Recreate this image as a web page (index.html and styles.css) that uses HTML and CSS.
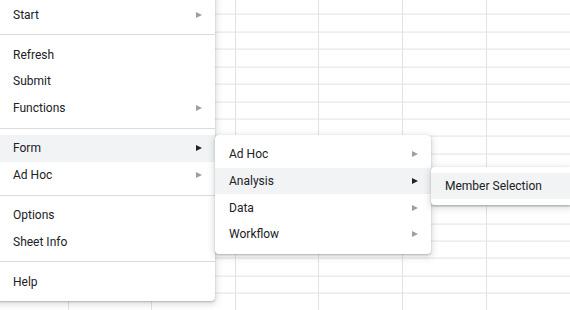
FILE: index.html
```html
<!DOCTYPE html>
<html lang="en">
<head>
  <meta charset="UTF-8">
  <title>Sheet add-on menu</title>
  <link rel="stylesheet" href="styles.css">
</head>
<body>
  <div class="sheet"></div>

  <!-- Main add-on menu -->
  <ul class="menu menu-main">
    <li class="item has-sub"><span>Start</span><i class="arrow"></i></li>
    <li class="sep"></li>
    <li class="item"><span>Refresh</span></li>
    <li class="item"><span>Submit</span></li>
    <li class="item has-sub"><span>Functions</span><i class="arrow"></i></li>
    <li class="sep"></li>
    <li class="item has-sub active"><span>Form</span><i class="arrow"></i></li>
    <li class="item has-sub"><span>Ad Hoc</span><i class="arrow"></i></li>
    <li class="sep"></li>
    <li class="item"><span>Options</span></li>
    <li class="item"><span>Sheet Info</span></li>
    <li class="sep"></li>
    <li class="item"><span>Help</span></li>
  </ul>

  <!-- Form submenu -->
  <ul class="menu menu-form">
    <li class="item has-sub"><span>Ad Hoc</span><i class="arrow"></i></li>
    <li class="item has-sub active"><span>Analysis</span><i class="arrow"></i></li>
    <li class="item has-sub"><span>Data</span><i class="arrow"></i></li>
    <li class="item has-sub"><span>Workflow</span><i class="arrow"></i></li>
  </ul>

  <!-- Analysis submenu -->
  <ul class="menu menu-analysis">
    <li class="item active"><span>Member Selection</span></li>
  </ul>
</body>
</html>
```

FILE: styles.css
```css
body {
  margin: 0;
  width: 570px;
  height: 310px;
  overflow: hidden;
  position: relative;
  background: #fff;
  font-family: Roboto, "Noto Sans", Arial, sans-serif;
  font-size: 12px;
  color: #202124;
}

/* Spreadsheet grid behind the menus */
.sheet {
  height: 100%;
  background-color: #fff;
  background-image:
    repeating-linear-gradient(to right, transparent 0, transparent 82.6px, #e2e2e2 82.6px, #e2e2e2 83.6px),
    repeating-linear-gradient(to bottom, transparent 0, transparent 16.43px, #e2e2e2 16.43px, #e2e2e2 17.43px);
  background-position: -15px 0, 0 -2.43px;
}

.menu {
  position: absolute;
  margin: 0;
  padding: 6px 0;
  list-style: none;
  background: #fff;
  border-radius: 4px;
  box-shadow: 0 2px 6px 2px rgba(60, 64, 67, 0.15), 0 1px 2px rgba(60, 64, 67, 0.3);
}

.menu-main {
  left: -4px;
  top: -4.85px;
  width: 219px;
}
.menu-form {
  left: 215px;
  top: 135px;
  width: 216px;
}
.menu-analysis {
  left: 431px;
  top: 167px;
  width: 139px;
  padding: 5.5px 0;
  border-radius: 4px 0 0 4px;
}

.item {
  height: 26.7px;
  display: flex;
  align-items: center;
  justify-content: space-between;
  padding: 0 13px 0 17px;
}
.menu-form .item,
.menu-analysis .item {
  padding-left: 14px;
}
.item.active {
  background: #f1f3f4;
}

.sep {
  height: 1px;
  margin: 6.25px 0;
  background: #dadce0;
}

/* small submenu triangle */
.arrow {
  width: 0;
  height: 0;
  border-top: 3.5px solid transparent;
  border-bottom: 3.5px solid transparent;
  border-left: 6px solid #9aa0a6;
}
.active .arrow {
  border-left-color: #202124;
}
```
